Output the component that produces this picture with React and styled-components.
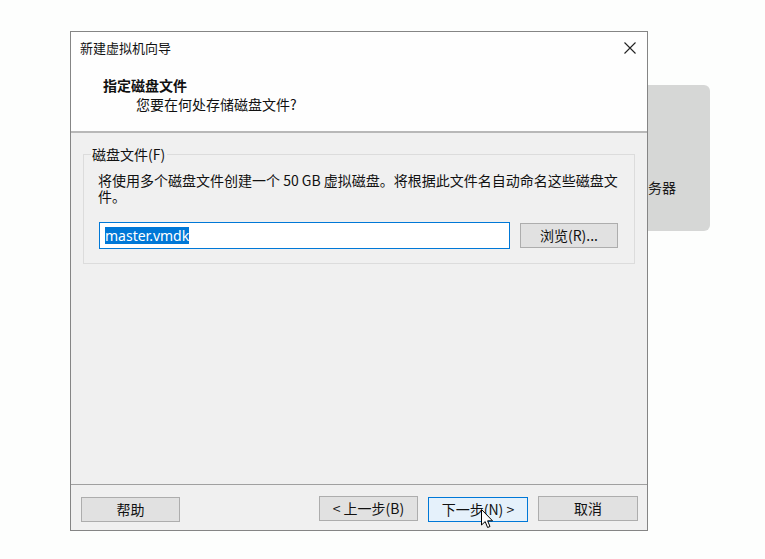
import React from 'react';
import styled, { createGlobalStyle } from 'styled-components';

const GlobalStyle = createGlobalStyle`
  html, body {
    margin: 0;
    padding: 0;
    background: #fdfefd;
  }
  body {
    font-family: "Noto Sans CJK SC", "Noto Sans", sans-serif;
    color: #111;
  }
`

const Desktop = styled.div`
  position: relative;
  width: 765px;
  height: 559px;
  overflow: hidden;
  background: #fdfefd;
`

const BackWindow = styled.div`
  position: absolute;
  left: 560px;
  top: 85px;
  width: 150px;
  height: 146px;
  box-sizing: border-box;
  padding: 93px 0 0 74px;
  background: #d6d7d6;
  border-radius: 6px;
  font-size: 14px;
  line-height: 18px;
  color: #1a1a1a;
`

const Dialog = styled.div`
  position: absolute;
  left: 70px;
  top: 31px;
  width: 578px;
  height: 500px;
  box-sizing: border-box;
  border: 1px solid #858585;
  background: #f0f0f0;
  display: flex;
  flex-direction: column;
`

const Header = styled.div`
  height: 99px;
  flex-shrink: 0;
  background: #fefefe;
  border-bottom: 2px solid #b8b8b8;
`

const TitleRow = styled.div`
  display: flex;
  justify-content: space-between;
  align-items: center;
  margin-top: 6px;
  padding: 0 11px 0 9px;
  height: 20px;
`

const Title = styled.span`
  font-size: 13px;
  line-height: 20px;
`

const CloseIcon = styled.svg`
  width: 12px;
  height: 12px;
  display: block;
`

const Heading = styled.div`
  margin-top: 17px;
  padding-left: 32px;
  font-size: 14px;
  line-height: 20px;
  font-weight: 700;
`

const SubHeading = styled.div`
  padding-left: 65px;
  font-size: 14px;
  line-height: 18px;
`

const Body = styled.div`
  flex: 1;
  padding: 12px 0 0 12px;
`

const Group = styled.fieldset`
  margin: 0;
  width: 552px;
  box-sizing: border-box;
  border: 1px solid #dcdcdc;
  padding: 9px 14px 14px 14px;
`

const Legend = styled.legend`
  margin-left: -7px;
  padding: 0 2px 0 1px;
  font-size: 14px;
  line-height: 18px;
`

const Description = styled.p`
  margin: 0;
  font-size: 14px;
  line-height: 16px;
  padding-right: 2px;
`

const FileRow = styled.div`
  display: flex;
  align-items: center;
  gap: 10px;
  margin-top: 18px;
  padding-left: 1px;
`

const TextBox = styled.div`
  width: 411px;
  height: 27px;
  box-sizing: border-box;
  border: 1px solid #0078d7;
  background: #fff;
  display: flex;
  align-items: center;
  padding-left: 5px;
  font-family: "Noto Sans", "Noto Sans CJK SC", sans-serif;
  font-size: 14px;
`

const Selected = styled.span`
  background: #0078d7;
  color: #fff;
  line-height: 17px;
`

const Button = styled.button`
  width: ${p => p.$width || 99}px;
  height: 25px;
  box-sizing: border-box;
  padding: 0;
  margin: 0;
  border: 1px solid ${p => (p.$primary ? '#0078d7' : '#adadad')};
  background: ${p => (p.$primary ? '#e5f1fb' : '#e1e1e1')};
  font-family: "Noto Sans CJK SC", "Noto Sans", sans-serif;
  font-size: 14px;
  color: #111;
  line-height: 23px;
`

const Footer = styled.div`
  flex-shrink: 0;
  border-top: 1px solid #a0a0a0;
  display: flex;
  align-items: center;
  padding: 11px 9px 8px 10px;
`

const Spacer = styled.div`
  flex: 1;
`

const ButtonGroup = styled.div`
  display: flex;
  gap: 10px;
`

const NextWrap = styled.div`
  position: relative;
`

const Cursor = styled.svg`
  position: absolute;
  left: 53px;
  top: 13px;
  width: 13px;
  height: 20px;
`

export default function App() {
  return (
    <>
      <GlobalStyle />
      <Desktop>
        <BackWindow>服务器</BackWindow>
        <Dialog>
          <Header>
            <TitleRow>
              <Title>新建虚拟机向导</Title>
              <CloseIcon viewBox="0 0 12 12">
                <path d="M0.5 0.5 L11.5 11.5 M11.5 0.5 L0.5 11.5" stroke="#222" strokeWidth="1.1" fill="none" />
              </CloseIcon>
            </TitleRow>
            <Heading>指定磁盘文件</Heading>
            <SubHeading>您要在何处存储磁盘文件?</SubHeading>
          </Header>
          <Body>
            <Group>
              <Legend>磁盘文件(F)</Legend>
              <Description>
                将使用多个磁盘文件创建一个 50 GB 虚拟磁盘。将根据此文件名自动命名这些磁盘文件。
              </Description>
              <FileRow>
                <TextBox>
                  <Selected>master.vmdk</Selected>
                </TextBox>
                <Button $width={98}>浏览(R)...</Button>
              </FileRow>
            </Group>
          </Body>
          <Footer>
            <Button>帮助</Button>
            <Spacer />
            <ButtonGroup>
              <Button>&lt; 上一步(B)</Button>
              <NextWrap>
                <Button $primary $width={100}>下一步(N) &gt;</Button>
                <Cursor viewBox="0 0 13 20">
                  <path d="M0.5 0.5 L0.5 16 L4.2 12.6 L6.6 18.5 L9 17.5 L6.6 11.8 L11.5 11.8 Z" fill="#fff" stroke="#000" strokeWidth="1" strokeLinejoin="round" />
                </Cursor>
              </NextWrap>
              <Button $width={100}>取消</Button>
            </ButtonGroup>
          </Footer>
        </Dialog>
      </Desktop>
    </>
  );
}
